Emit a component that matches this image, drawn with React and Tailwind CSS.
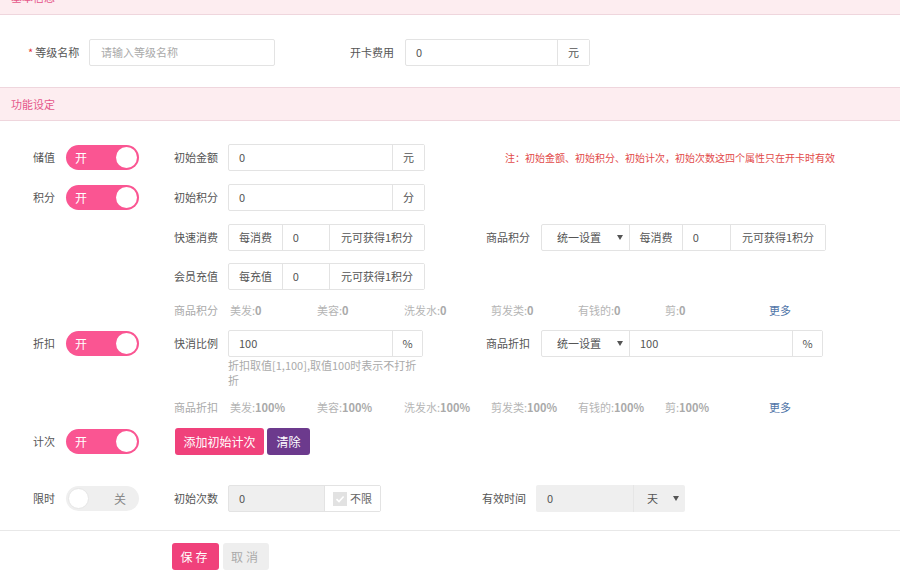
import React from 'react';

const font = { fontFamily: '"Noto Sans CJK SC", "Microsoft YaHei", sans-serif' };

function Caret() {
  return (
    <svg width="6" height="5" viewBox="0 0 6 5" className="shrink-0">
      <path d="M0 0 H6 L3 5 Z" fill="#555" />
    </svg>
  );
}

function Toggle({ on = true }) {
  if (on) {
    return (
      <div className="relative w-[73px] h-[25px] rounded-full bg-[#fa5592] flex items-center pl-[9px] text-[12px] text-white shrink-0">
        开
        <div className="absolute right-[2px] top-[2px] w-[21px] h-[21px] rounded-full bg-white" />
      </div>
    );
  }
  return (
    <div className="relative w-[73px] h-[25px] rounded-full bg-[#efefef] flex items-center justify-end pr-[13px] text-[12px] text-[#888] shrink-0">
      关
      <div className="absolute left-[2px] top-[2px] w-[21px] h-[21px] rounded-full bg-white border border-[#e6e6e6]" />
    </div>
  );
}

function Addon({ children, w }) {
  return (
    <div
      className="h-full flex items-center justify-center border-l border-[#e3e3e3] text-[11px] text-[#555] shrink-0 bg-white"
      style={{ width: w }}
    >
      {children}
    </div>
  );
}

function UnitInput({ value, unit, width = 197, unitW = 32 }) {
  return (
    <div className="h-[27px] flex border border-[#e3e3e3] rounded-[2px] bg-white" style={{ width }}>
      <div className="flex-1 flex items-center pl-[10px] text-[11px] text-[#555]">{value}</div>
      <Addon w={unitW}>{unit}</Addon>
    </div>
  );
}

function RateInput({ pre }) {
  return (
    <div className="h-[27px] w-[197px] flex border border-[#e3e3e3] rounded-[2px] bg-white">
      <div className="w-[54px] flex items-center justify-center text-[11px] text-[#555]">{pre}</div>
      <div className="w-[48px] border-l border-[#e3e3e3] flex items-center pl-[10px] text-[11px] text-[#555]">0</div>
      <Addon w={95}>元可获得1积分</Addon>
    </div>
  );
}

function Select({ text = '统一设置', w = 87 }) {
  return (
    <div className="h-full flex items-center justify-between pl-[15px] pr-[6px] text-[11px] text-[#555] shrink-0" style={{ width: w }}>
      <span>{text}</span>
      <Caret />
    </div>
  );
}

function Label({ children, className = '' }) {
  return <div className={`text-[11px] text-[#555] ${className}`}>{children}</div>;
}

function LeftCol({ label, toggle }) {
  return (
    <div className="w-[174px] shrink-0 flex items-center pl-[33px]">
      {label && <Label className="w-[33px]">{label}</Label>}
      {toggle}
    </div>
  );
}

function SummaryLine({ title, items }) {
  return (
    <div className="flex items-center h-[16px] text-[11px] text-[#b5b5b5]">
      <div className="w-[174px] shrink-0" />
      <div className="w-[56px] shrink-0 text-[#aaa]">{title}</div>
      {items.map(([k, v]) => (
        <div key={k} className="w-[87px] shrink-0">
          {k}:<span className="font-bold text-[#aaa]">{v}</span>
        </div>
      ))}
      <div className="ml-[17px] text-[#4f75a8]">更多</div>
    </div>
  );
}

export default function App() {
  const names = ['美发', '美容', '洗发水', '剪发类', '有钱的', '剪'];
  return (
    <div className="w-[900px] h-[575px] overflow-hidden bg-white" style={font}>
      {/* 基本信息 */}
      <div className="mt-[-20px] h-[35px] bg-[#fdedf0] border-b border-[#efd6dd] flex items-center pl-[11px] text-[11px] text-[#e5578a]">
        基本信息
      </div>

      <div className="flex items-center h-[27px] mt-[24px]">
        <div className="w-[89px] shrink-0 pl-[28px] text-[11px] text-[#555]">
          <span className="text-[#e53b3b] mr-[2px]">*</span>等级名称
        </div>
        <div className="w-[186px] h-[27px] border border-[#e3e3e3] rounded-[2px] flex items-center pl-[11px] text-[11px] text-[#aaa]">
          请输入等级名称
        </div>
        <Label className="ml-[75px] w-[55px]">开卡费用</Label>
        <UnitInput value="0" unit="元" width={185} unitW={32} />
      </div>

      {/* 功能设定 */}
      <div className="mt-[21px] h-[34px] bg-[#fdedf0] border-y border-[#efd6dd] flex items-center pl-[11px] text-[11px] text-[#e5578a]">
        功能设定
      </div>

      {/* 储值 */}
      <div className="flex items-center h-[27px] mt-[23px]">
        <LeftCol label="储值" toggle={<Toggle />} />
        <Label className="w-[54px]">初始金额</Label>
        <UnitInput value="0" unit="元" />
        <div className="ml-[80px] text-[10px] text-[#e24a4a]">注：初始金额、初始积分、初始计次，初始次数这四个属性只在开卡时有效</div>
      </div>

      {/* 积分 */}
      <div className="flex items-center h-[27px] mt-[13px]">
        <LeftCol label="积分" toggle={<Toggle />} />
        <Label className="w-[54px]">初始积分</Label>
        <UnitInput value="0" unit="分" />
      </div>

      <div className="flex items-center h-[27px] mt-[13px]">
        <LeftCol />
        <Label className="w-[54px]">快速消费</Label>
        <RateInput pre="每消费" />
        <Label className="ml-[61px] w-[55px]">商品积分</Label>
        <div className="h-[27px] w-[285px] flex border border-[#e3e3e3] rounded-[2px]">
          <Select />
          <div className="w-[54px] border-l border-[#e3e3e3] flex items-center justify-center text-[11px] text-[#555]">每消费</div>
          <div className="w-[49px] border-l border-[#e3e3e3] flex items-center pl-[10px] text-[11px] text-[#555]">0</div>
          <Addon w={95}>元可获得1积分</Addon>
        </div>
      </div>

      <div className="flex items-center h-[27px] mt-[12px]">
        <LeftCol />
        <Label className="w-[54px]">会员充值</Label>
        <RateInput pre="每充值" />
      </div>

      <div className="mt-[12px]">
        <SummaryLine title="商品积分" items={names.map((n) => [n, '0'])} />
      </div>

      {/* 折扣 */}
      <div className="flex items-start mt-[12px]">
        <div className="h-[27px] flex items-center">
          <LeftCol label="折扣" toggle={<Toggle />} />
          <Label className="w-[54px]">快消比例</Label>
        </div>
        <div className="w-[195px]">
          <UnitInput value="100" unit="%" width={195} unitW={30} />
          <div className="w-[192px] mt-[1px] text-[11px] leading-[15px] text-[#aaa]">
            折扣取值[1,100],取值100时表示不打折折
          </div>
        </div>
        <div className="h-[27px] flex items-center">
          <Label className="ml-[63px] w-[55px]">商品折扣</Label>
          <div className="h-[27px] w-[282px] flex border border-[#e3e3e3] rounded-[2px]">
            <Select />
            <div className="flex-1 border-l border-[#e3e3e3] flex items-center pl-[10px] text-[11px] text-[#555]">100</div>
            <Addon w={30}>%</Addon>
          </div>
        </div>
      </div>

      <div className="mt-[11px]">
        <SummaryLine title="商品折扣" items={names.map((n) => [n, '100%'])} />
      </div>

      {/* 计次 */}
      <div className="flex items-center h-[27px] mt-[13px]">
        <LeftCol label="计次" toggle={<Toggle />} />
        <button className="ml-[1px] h-[27px] w-[89px] rounded-[3px] bg-[#f0417b] text-white text-[12px]">添加初始计次</button>
        <button className="ml-[3px] h-[27px] w-[43px] rounded-[3px] bg-[#6c3a8d] text-white text-[12px]">清除</button>
      </div>

      {/* 限时 */}
      <div className="flex items-center h-[27px] mt-[30px]">
        <LeftCol label="限时" toggle={<Toggle on={false} />} />
        <Label className="w-[54px]">初始次数</Label>
        <div className="h-[27px] w-[153px] flex border border-[#e3e3e3] rounded-[2px] bg-[#efefef]">
          <div className="flex-1 flex items-center pl-[10px] text-[11px] text-[#555]">0</div>
          <div className="w-[56px] bg-white border-l border-[#e3e3e3] flex items-center pl-[8px] gap-[3px] text-[11px] text-[#666]">
            <span className="w-[14px] h-[14px] bg-[#e2e2e2] flex items-center justify-center">
              <svg width="10" height="10" viewBox="0 0 10 10"><path d="M1.5 5.2 L4 7.6 L8.6 2.5" fill="none" stroke="#fff" strokeWidth="1.6" /></svg>
            </span>
            不限
          </div>
        </div>
        <Label className="ml-[101px] w-[54px]">有效时间</Label>
        <div className="h-[27px] w-[149px] flex rounded-[2px] bg-[#efefef]">
          <div className="w-[97px] flex items-center pl-[11px] text-[11px] text-[#555]">0</div>
          <div className="flex-1 border-l border-[#e6e6e6] flex items-center justify-between pl-[13px] pr-[6px] text-[11px] text-[#555]">
            <span>天</span>
            <Caret />
          </div>
        </div>
      </div>

      <div className="mt-[18px] border-t border-[#e8e8e8]" />

      <div className="flex items-center mt-[12px] pl-[172px] gap-[4px]">
        <button className="h-[27px] w-[47px] rounded-[3px] bg-[#f0417b] text-white text-[12px] tracking-[3px]">保存</button>
        <button className="h-[27px] w-[46px] rounded-[3px] bg-[#eeeeee] text-[#aaa] text-[12px] tracking-[3px]">取消</button>
      </div>
    </div>
  );
}
